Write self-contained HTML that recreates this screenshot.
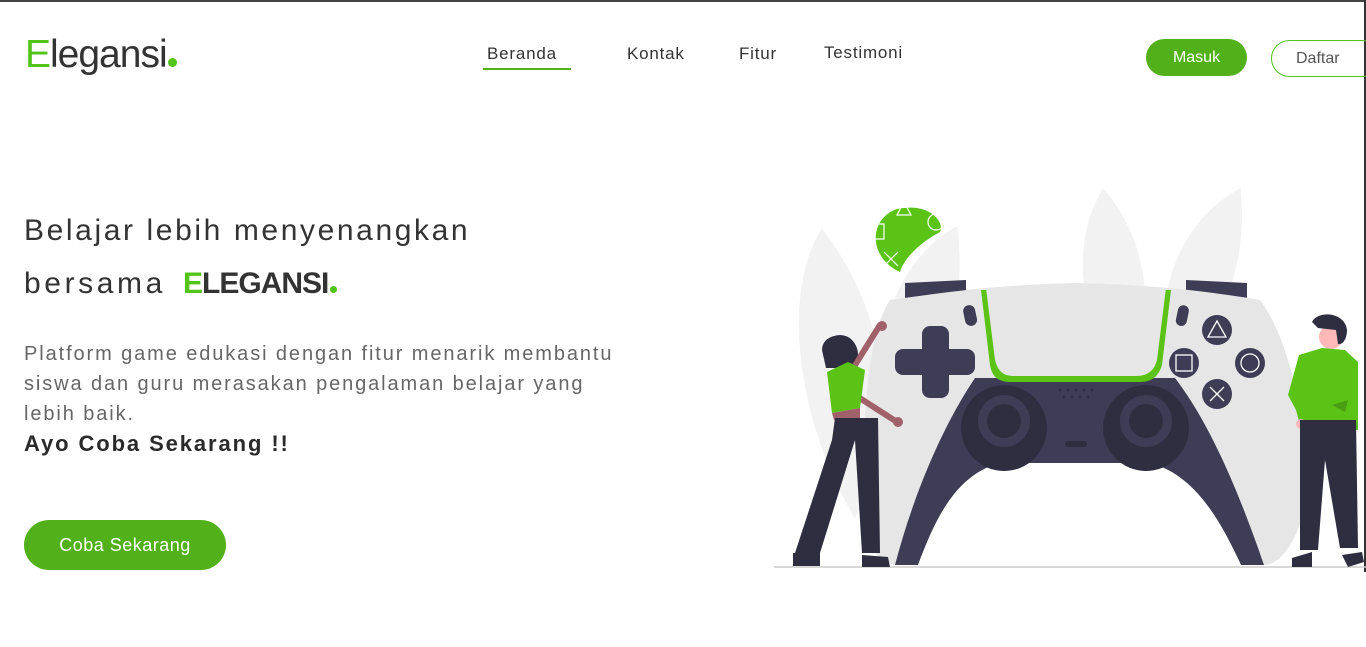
<!DOCTYPE html>
<html><head><meta charset="utf-8"><style>
*{margin:0;padding:0;box-sizing:border-box}
body{width:1366px;height:647px;overflow:hidden;background:#fff;font-family:"Liberation Sans",sans-serif;position:relative;color:#333}
.a{position:absolute;white-space:nowrap}
</style></head><body>
<div class="a" style="left:0;top:0;width:1366px;height:2px;background:#444"></div>
<div class="a" style="left:1364px;top:0;width:2px;height:572px;background:#333"></div>
<div class="a" style="left:25px;top:33px;font-size:39px;letter-spacing:-1px;color:#333"><span style="color:#52c41a">E</span>legansi<span style="display:inline-block;width:9px;height:9px;border-radius:50%;background:#52c41a;margin-left:1px"></span></div>
<div class="a" style="left:487px;top:44px;font-size:17px;color:#333;letter-spacing:.8px">Beranda</div>
<div class="a" style="left:483px;top:68px;width:88px;height:2px;background:#52b11a"></div>
<div class="a" style="left:627px;top:44px;font-size:17px;letter-spacing:.8px">Kontak</div>
<div class="a" style="left:739px;top:44px;font-size:17px;letter-spacing:.8px">Fitur</div>
<div class="a" style="left:824px;top:43px;font-size:17px;letter-spacing:.8px">Testimoni</div>
<div class="a" style="left:1146px;top:39px;width:101px;height:37px;border-radius:19px;background:#52b11a;color:#fff;font-size:16px;text-align:center;line-height:37px">Masuk</div>
<div class="a" style="left:1271px;top:40px;width:110px;height:37px;border-radius:19px;border:1.5px solid #52c41a;color:#555;font-size:16px;line-height:35px;padding-left:24px">Daftar</div>
<div class="a" style="left:24px;top:214px;font-size:30px;letter-spacing:2.6px;color:#333">Belajar lebih menyenangkan</div>
<div class="a" style="left:24px;top:267px;font-size:30px;letter-spacing:3.6px;color:#333">bersama</div>
<div class="a" style="left:183px;top:267px;font-size:30px;letter-spacing:-1px;color:#333"><b style="color:#52c41a">E</b><b>LEGANSI</b><span style="display:inline-block;width:7px;height:7px;border-radius:50%;background:#52c41a;margin-left:2px"></span></div>
<div class="a" style="left:24px;top:339px;font-size:20px;line-height:30px;color:#666;letter-spacing:1.9px;white-space:nowrap">Platform game edukasi dengan fitur menarik membantu<br>siswa dan guru merasakan pengalaman belajar yang<br>lebih baik.</div>
<div class="a" style="left:24px;top:431px;font-size:22px;font-weight:bold;color:#2a2a2a;letter-spacing:1.9px">Ayo Coba Sekarang !!</div>
<div class="a" style="left:24px;top:520px;width:202px;height:50px;border-radius:25px;background:#52b11a;color:#fff;font-size:18px;line-height:50px;text-align:center;letter-spacing:.5px">Coba Sekarang</div>
<svg class="a" style="left:0;top:0" width="1366" height="647" viewBox="0 0 1366 647">
<g fill="#f2f2f2" stroke="#fff" stroke-width="1.5">
<path d="M822 227 C780 290 795 420 855 520 C895 440 900 330 822 227Z"/>
<path d="M958 225 C890 260 860 360 875 480 C935 420 970 320 958 225Z"/>
<path d="M1103 187 C1070 240 1075 320 1125 390 C1160 320 1150 240 1103 187Z"/>
<path d="M1241 187 C1180 220 1150 290 1165 390 C1225 330 1250 260 1241 187Z"/>
</g>
<path d="M905 208 C930 205 945 222 940 232 C925 240 905 255 900 272 C878 262 870 240 880 222 C886 213 895 208 905 208Z" fill="#5ac316"/>
<g fill="none" stroke="#fff" stroke-width="1.2"><path d="M904 202 L911 215 L897 215Z"/><circle cx="936" cy="222" r="8"/><rect x="869" y="224" width="15" height="15"/><path d="M884 252 L898 266 M898 252 L884 266"/></g>
<path d="M905 283 L966 280 L966 302 L905 302Z" fill="#3f3d56"/>
<path d="M1186 280 L1247 283 L1247 302 L1186 302Z" fill="#3f3d56"/>
<path d="M890 300 C960 290 1000 285 1076 283 C1150 285 1200 290 1260 300 C1290 340 1310 430 1305 500 C1300 540 1280 565 1264 565 L1241 565 C1220 530 1200 490 1150 475 L1000 475 C950 490 930 530 918 565 L895 565 C870 560 860 530 862 480 C864 400 870 330 890 300Z" fill="#e6e6e6"/>
<path d="M975 378 L1175 378 C1215 430 1245 510 1264 565 L1241 565 C1220 520 1195 475 1150 463 L1000 463 C955 475 935 520 918 565 L895 565 C912 500 940 430 975 378Z" fill="#3f3d56"/>
<path d="M1000 463 L1150 463 C1195 475 1220 520 1241 565 L918 565 C935 520 955 475 1000 463Z" fill="#fff"/>
<circle cx="1004" cy="428" r="43" fill="#2f2e41"/><circle cx="1004" cy="421" r="26" fill="#3f3d56"/><circle cx="1004" cy="421" r="17" fill="#2f2e41"/>
<circle cx="1146" cy="428" r="43" fill="#2f2e41"/><circle cx="1146" cy="421" r="26" fill="#3f3d56"/><circle cx="1146" cy="421" r="17" fill="#2f2e41"/>
<rect x="1065" y="441" width="22" height="6" rx="3" fill="#2f2e41"/>
<g fill="#2f2e41"><circle cx="1060" cy="390" r="1.5"/><circle cx="1068" cy="390" r="1.5"/><circle cx="1076" cy="390" r="1.5"/><circle cx="1084" cy="390" r="1.5"/><circle cx="1092" cy="390" r="1.5"/><circle cx="1064" cy="397" r="1.5"/><circle cx="1072" cy="397" r="1.5"/><circle cx="1080" cy="397" r="1.5"/><circle cx="1088" cy="397" r="1.5"/></g>
<path d="M981 290 L1171 290 L1162 365 C1158 378 1150 382 1140 382 L1010 382 C1000 382 992 378 990 365Z" fill="#5ac316"/>
<path d="M986 288 L1166 288 L1157 360 C1154 372 1146 376 1136 376 L1014 376 C1004 376 998 372 995 360Z" fill="#e6e6e6"/>
<rect x="964" y="305" width="12" height="21" rx="6" fill="#3f3d56" transform="rotate(-12 970 315)"/>
<rect x="1177" y="305" width="11" height="21" rx="5.5" fill="#3f3d56" transform="rotate(12 1182 315)"/>
<g fill="#3f3d56"><rect x="922" y="326" width="27" height="36" rx="8"/><rect x="922" y="362" width="27" height="36" rx="8"/><rect x="895" y="349" width="38" height="26" rx="8"/><rect x="937" y="349" width="38" height="26" rx="8"/></g>
<g fill="#3f3d56"><circle cx="1217" cy="330" r="15"/><circle cx="1184" cy="363" r="15"/><circle cx="1250" cy="363" r="15"/><circle cx="1217" cy="394" r="15"/></g>
<g fill="none" stroke="#fff" stroke-width="1.3"><path d="M1217 321 L1226 337 L1208 337Z"/><rect x="1176" y="355" width="16" height="16"/><circle cx="1250" cy="363" r="9"/><path d="M1210 387 L1224 401 M1224 387 L1210 401"/></g>
<line x1="774" y1="567" x2="1366" y2="567" stroke="#ccc" stroke-width="1.5"/>
<g>
<path d="M855 365 L880 325" stroke="#a0616a" stroke-width="6" stroke-linecap="round"/><circle cx="882" cy="326" r="5" fill="#a0616a"/>
<path d="M855 395 L897 422" stroke="#a0616a" stroke-width="6" stroke-linecap="round"/><circle cx="898" cy="422" r="5" fill="#a0616a"/>
<circle cx="840" cy="352" r="17" fill="#2f2e41"/><path d="M822 350 C822 330 858 330 858 355 L850 368 L826 368Z" fill="#2f2e41"/>
<path d="M827 372 L848 362 L865 370 L860 408 L832 413Z" fill="#5ac316"/>
<path d="M832 413 L860 408 L860 418 L834 420Z" fill="#a0616a"/>
<path d="M835 418 L878 418 L880 553 L862 553 L855 440 L820 553 L795 553 L832 440Z" fill="#2f2e41"/>
<path d="M793 553 L820 553 L820 566 L793 566Z" fill="#2f2e41"/><path d="M862 555 L888 557 L890 567 L862 567Z" fill="#2f2e41"/>
</g>
<g>
<circle cx="1331" cy="337" r="12" fill="#ffb8b8"/>
<path d="M1312 322 C1318 310 1345 312 1347 330 C1347 340 1342 345 1338 344 L1336 330 L1318 328Z" fill="#2f2e41"/>
<path d="M1299 355 L1322 348 L1345 350 L1358 362 L1358 430 L1300 425 L1296 410 L1288 395Z" fill="#5ac316"/>
<path d="M1332 405 L1348 400 L1345 412Z" fill="#4a9e14"/>
<circle cx="1301" cy="424" r="5" fill="#ffb8b8"/>
<path d="M1300 420 L1356 420 L1358 548 L1340 548 L1325 460 L1318 550 L1300 550Z" fill="#2f2e41"/>
<path d="M1292 558 L1312 552 L1312 567 L1292 567Z" fill="#2f2e41"/><path d="M1342 555 L1362 552 L1364 562 L1348 567Z" fill="#2f2e41"/>
</g>
</svg>
</body></html>
